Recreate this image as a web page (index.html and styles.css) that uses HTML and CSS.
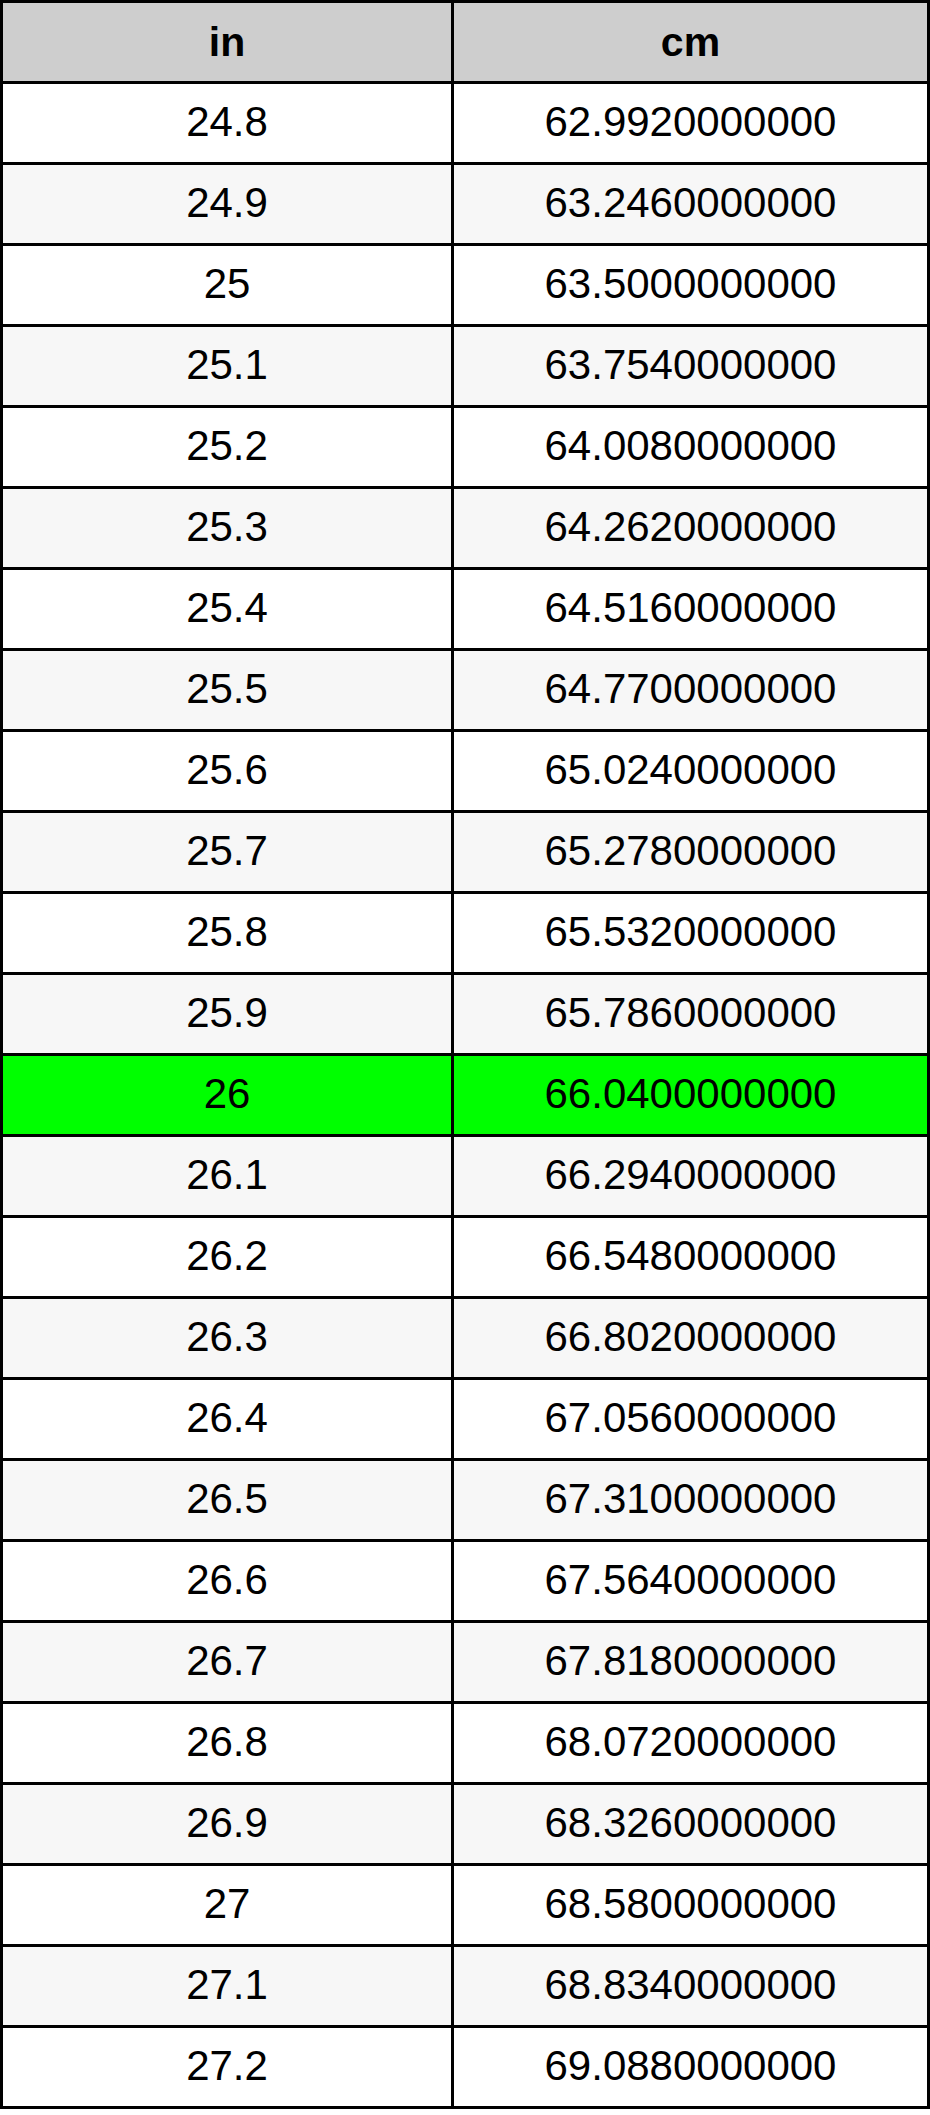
FILE: index.html
```html
<!DOCTYPE html>
<html>
<head>
<meta charset="utf-8">
<link rel="stylesheet" href="styles.css">
</head>
<body>
<table class="conv">
<colgroup><col class="c-in"><col class="c-cm"></colgroup>
<thead>
<tr><th>in</th><th>cm</th></tr>
</thead>
<tbody>
<tr><td>24.8</td><td>62.9920000000</td></tr>
<tr class="alt"><td>24.9</td><td>63.2460000000</td></tr>
<tr><td>25</td><td>63.5000000000</td></tr>
<tr class="alt"><td>25.1</td><td>63.7540000000</td></tr>
<tr><td>25.2</td><td>64.0080000000</td></tr>
<tr class="alt"><td>25.3</td><td>64.2620000000</td></tr>
<tr><td>25.4</td><td>64.5160000000</td></tr>
<tr class="alt"><td>25.5</td><td>64.7700000000</td></tr>
<tr><td>25.6</td><td>65.0240000000</td></tr>
<tr class="alt"><td>25.7</td><td>65.2780000000</td></tr>
<tr><td>25.8</td><td>65.5320000000</td></tr>
<tr class="alt"><td>25.9</td><td>65.7860000000</td></tr>
<tr class="hl"><td>26</td><td>66.0400000000</td></tr>
<tr class="alt"><td>26.1</td><td>66.2940000000</td></tr>
<tr><td>26.2</td><td>66.5480000000</td></tr>
<tr class="alt"><td>26.3</td><td>66.8020000000</td></tr>
<tr><td>26.4</td><td>67.0560000000</td></tr>
<tr class="alt"><td>26.5</td><td>67.3100000000</td></tr>
<tr><td>26.6</td><td>67.5640000000</td></tr>
<tr class="alt"><td>26.7</td><td>67.8180000000</td></tr>
<tr><td>26.8</td><td>68.0720000000</td></tr>
<tr class="alt"><td>26.9</td><td>68.3260000000</td></tr>
<tr><td>27</td><td>68.5800000000</td></tr>
<tr class="alt"><td>27.1</td><td>68.8340000000</td></tr>
<tr><td>27.2</td><td>69.0880000000</td></tr>
</tbody>
</table>
</body>
</html>
```

FILE: styles.css
```css
html, body {
  margin: 0;
  padding: 0;
  background: #ffffff;
}

.conv {
  width: 930px;
  table-layout: fixed;
  border-collapse: separate;
  border-spacing: 0;
  border-top: 3px solid #000;
  border-left: 3px solid #000;
  font-family: "Liberation Sans", Arial, Helvetica, sans-serif;
  font-size: 42px;
  color: #000;
}

.c-in { width: 451px; }
.c-cm { width: 476px; }

.conv th,
.conv td {
  box-sizing: border-box;
  height: 81px;
  padding: 0;
  border-right: 3px solid #000;
  border-bottom: 3px solid #000;
  text-align: center;
  vertical-align: middle;
  line-height: normal;
}

.conv th {
  background: #cecece;
  font-weight: bold;
  font-size: 41px;
}

.conv td {
  background: #ffffff;
  font-weight: normal;
  padding-bottom: 2px;
}

.conv tr.alt td {
  background: #f7f7f7;
}

.conv tr.hl td {
  background: #00ff00;
}
```
